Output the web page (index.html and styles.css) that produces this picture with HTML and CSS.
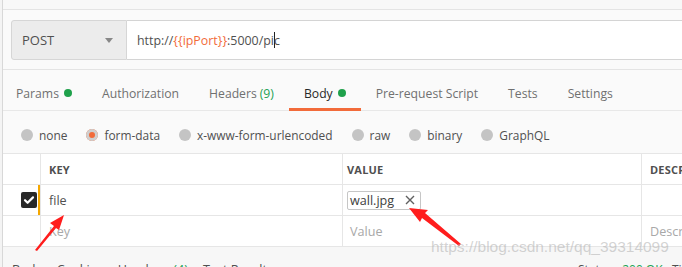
FILE: index.html
```html
<!DOCTYPE html>
<html>
<head>
<meta charset="utf-8">
<link rel="stylesheet" href="styles.css">
</head>
<body>
<div class="app">
  <div class="topstrip"></div>
  <div class="urlbar">
    <div class="method"><span>POST</span><span class="caret"></span></div>
    <div class="url"><span>http://</span><span class="var">{{ipPort}}</span><span>:5000/pi</span><span class="cursor"></span><span>c</span></div>
  </div>
  <div class="tabs">
    <div class="tab">Params <span class="dot"></span></div>
    <div class="tab">Authorization</div>
    <div class="tab">Headers <span class="green">(9)</span></div>
    <div class="tab active">Body <span class="dot"></span></div>
    <div class="tab">Pre-request Script</div>
    <div class="tab">Tests</div>
    <div class="tab">Settings</div>
  </div>
  <div class="radios">
    <div class="radio"><span class="circle"></span>none</div>
    <div class="radio"><span class="circle on"></span>form-data</div>
    <div class="radio"><span class="circle"></span>x-www-form-urlencoded</div>
    <div class="radio"><span class="circle"></span>raw</div>
    <div class="radio"><span class="circle"></span>binary</div>
    <div class="radio"><span class="circle"></span>GraphQL</div>
  </div>
  <div class="table">
    <div class="row head">
      <div class="c0"></div>
      <div class="c1">KEY</div>
      <div class="c2">VALUE</div>
      <div class="c3">DESCRI</div>
    </div>
    <div class="row">
      <div class="c0"><span class="check"><svg width="16" height="16" viewBox="0 0 16 16"><path d="M4 8.2l2.6 2.6L12 5.4" fill="none" stroke="#fff" stroke-width="2.2" stroke-linecap="round" stroke-linejoin="round"/></svg></span><span class="bar"></span></div>
      <div class="c1">file</div>
      <div class="c2"><span class="chip">wall.jpg <svg class="x" width="10" height="10" viewBox="0 0 10 10"><path d="M1 1L9 9M9 1L1 9" stroke="#606060" stroke-width="1.4"/></svg></span></div>
      <div class="c3"></div>
    </div>
    <div class="row">
      <div class="c0"></div>
      <div class="c1 ph">Key</div>
      <div class="c2 ph">Value</div>
      <div class="c3 ph">Descr</div>
    </div>
  </div>
  <div class="bottom">
    <div class="btabs">
      <span>Body</span><span>Cookies</span><span>Headers <span class="green">(4)</span></span><span>Test Results</span>
    </div>
    <div class="status">Status: <span class="green">200 OK</span>&nbsp;&nbsp;&nbsp;Ti</div>
  </div>
  <svg class="arrows" width="682" height="267" viewBox="0 0 682 267">
    <path d="M35 250 L54 226 L50 223 L64 215 L59 230 L56 228 L37 251 Z" fill="#ff1d1d"/>
    <path d="M461 244 L425 213 L428 210 L409 208 L420 222 L422 218 L459 246 Z" fill="#ff1d1d"/>
  </svg>
  <div class="watermark">https://blog.csdn.net/qq_39314099</div>
</div>
</body>
</html>
```
FILE: styles.css
```css
* { box-sizing: border-box; }
html, body { margin: 0; padding: 0; }
body {
  width: 682px;
  height: 267px;
  overflow: hidden;
  font-family: "Open Sans", "Liberation Sans", sans-serif;
  font-size: 12px;
  color: #505050;
  background: #f4f4f4;
}
.app {
  position: relative;
  margin-left: 2px;
  border-left: 1px solid #d8d8d8;
  height: 267px;
  background: #fafafa;
  display: flex;
  flex-direction: column;
}
.topstrip {
  height: 10px;
  border-bottom: 1px solid #e4e4e4;
  background: #f8f8f8;
}
.urlbar {
  height: 60px;
  padding: 10px 0 10px 8px;
  display: flex;
  border-bottom: 1px solid #e4e4e4;
  background: #fafafa;
}
.method {
  width: 116px;
  height: 40px;
  background: #ececec;
  border: 1px solid #d6d6d6;
  border-radius: 3px 0 0 3px;
  display: flex;
  align-items: center;
  justify-content: space-between;
  padding: 0 13px 0 10px;
  font-size: 13px;
  color: #505050;
}
.caret {
  width: 0; height: 0;
  border-left: 4px solid transparent;
  border-right: 4px solid transparent;
  border-top: 5px solid #888;
}
.url {
  flex: 1;
  height: 40px;
  background: #fff;
  border-top: 1px solid #d4d4d4;
  border-bottom: 1px solid #d4d4d4;
  display: flex;
  align-items: center;
  padding-left: 10px;
  font-size: 12.4px;
  color: #505050;
}
.url .var { color: #f26b3a; }
.cursor {
  width: 1px;
  height: 16px;
  background: #222;
  margin-right: -1px;
}
.tabs {
  height: 41px;
  display: flex;
  align-items: stretch;
  padding-left: 13px;
  padding-top: 6px;
  border-bottom: 1px solid #e8e8e8;
  background: #fafafa;
  font-size: 12.2px;
}
.tab {
  display: flex;
  align-items: center;
  padding: 0 15px;
  color: #707070;
  white-space: nowrap;
  position: relative;
}
.tab:first-child { padding-left: 0; }
.tab.active { color: #282828; }
.tab.active::after {
  content: "";
  position: absolute;
  left: 0; right: 0; bottom: -1px;
  height: 3px;
  background: #f26b3a;
}
.dot {
  display: inline-block;
  width: 8px; height: 8px;
  border-radius: 50%;
  background: #1fa14b;
  margin-left: 5px;
}
.green { color: #23a152; margin-left: 3px; }
.radios {
  height: 42px;
  display: flex;
  align-items: center;
  padding-left: 18px;
  padding-top: 5px;
  background: #fafafa;
  font-size: 11.9px;
}
.radio {
  display: flex;
  align-items: center;
  margin-right: 19px;
  color: #505050;
}
.circle {
  width: 12px; height: 12px;
  border-radius: 50%;
  background: #c4c4c4;
  margin-right: 6px;
}
.circle.on {
  background: #f26b3a;
  box-shadow: inset 0 0 0 3px #cfcfcf;
}
.table {
  background: #fff;
  border-top: 1px solid #e6e6e6;
}
.row {
  display: grid;
  grid-template-columns: 38px 302px 299px 1fr;
  height: 31px;
  border-bottom: 1px solid #e6e6e6;
}
.row > div {
  display: flex;
  align-items: center;
  border-right: 1px solid #e6e6e6;
  padding-left: 8px;
  font-size: 12.6px;
  overflow: hidden;
  white-space: nowrap;
}
.row > .c0 {
  padding-left: 18px;
  position: relative;
}
.row > .c3 { border-right: none; }
.row.head > div {
  font-size: 11px;
  font-weight: 700;
  color: #505050;
  letter-spacing: 0.2px;
}
.check {
  width: 16px; height: 16px;
  background: #282828;
  border-radius: 2px;
  display: flex;
}
.bar {
  position: absolute;
  right: -1px; top: 0; bottom: 0;
  width: 3px;
  background: #f5a700;
}
.row > .c2 { padding-left: 4px; }
.chip {
  display: inline-flex;
  align-items: center;
  height: 19px;
  border: 1px solid #c6c6c6;
  border-radius: 2px;
  padding: 0 5px 0 2px;
  color: #404040;
  font-size: 12.6px;
}
.chip .x { margin-left: 11px; }
.ph { color: #a8a8a8; }
.row > .c2.ph { padding-left: 7px; }
.bottom {
  flex: 1;
  background: #f7f7f7;
  position: relative;
}
.btabs {
  position: absolute;
  left: 9px;
  top: 14px;
  display: flex;
  gap: 15px;
  font-size: 12.6px;
  color: #505050;
}
.status {
  position: absolute;
  left: 575px;
  top: 14px;
  font-size: 12px;
  color: #505050;
  white-space: nowrap;
}
.arrows {
  position: absolute;
  left: -3px;
  top: 0;
  pointer-events: none;
}
.watermark {
  position: absolute;
  left: 428px;
  top: 238px;
  font-family: "Liberation Sans", sans-serif;
  font-size: 15.5px;
  color: rgba(175, 175, 175, 0.55);
  white-space: nowrap;
}
```
